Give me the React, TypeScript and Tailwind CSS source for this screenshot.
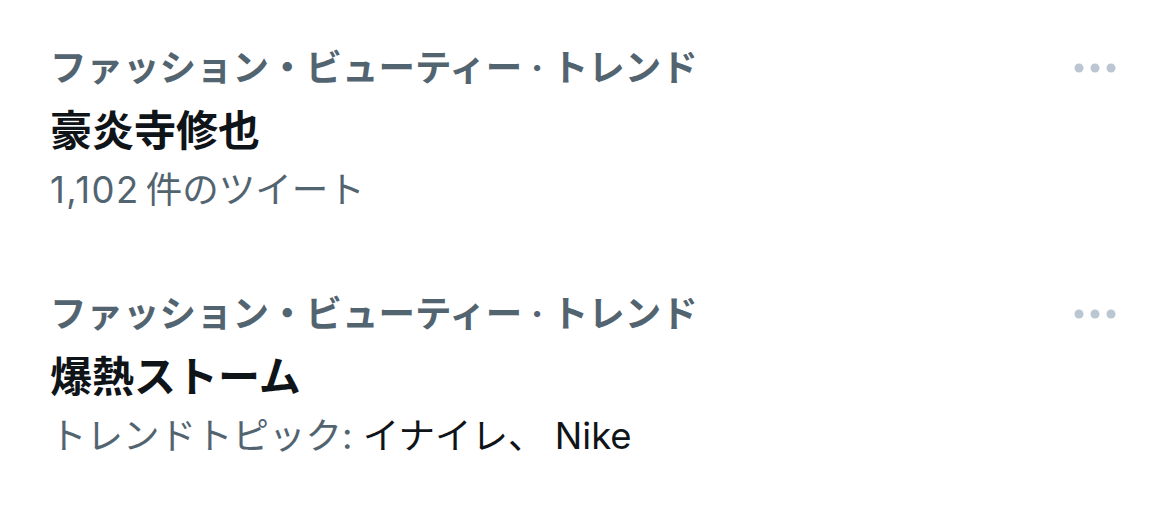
import React from "react";

type Trend = {
  category: string;
  title: string;
  meta: React.ReactNode;
};

const trends: Trend[] = [
  {
    category: "ファッション・ビューティー · トレンド",
    title: "豪炎寺修也",
    meta: (
      <span>
        <span className="tracking-[1.5px] mr-[6px]">1,102</span>件のツイート
      </span>
    ),
  },
  {
    category: "ファッション・ビューティー · トレンド",
    title: "爆熱ストーム",
    meta: (
      <span>
        トレンドトピック: <span className="text-[#0f1419]">イナイレ、 Nike</span>
      </span>
    ),
  },
];

function MoreDots() {
  return (
    <svg width="46" height="10" viewBox="0 0 46 10" fill="#bac6d1" aria-hidden="true">
      <circle cx="5" cy="5" r="4.5" />
      <circle cx="21" cy="5" r="4.5" />
      <circle cx="37" cy="5" r="4.5" />
    </svg>
  );
}

export default function App() {
  return (
    <div
      className="w-[1170px] h-[529px] bg-white overflow-hidden"
      style={{ fontFamily: 'Inter, "Noto Sans CJK JP", sans-serif' }}
    >
      {trends.map((t, i) => (
        <div key={i} className="flex justify-between pl-[50px] pr-[50px] pt-[36px] pb-[28px]">
          <div className="flex flex-col">
            <div className="text-[36.5px] leading-[64px] font-bold text-[#536471]">{t.category}</div>
            <div className="text-[42px] leading-[62px] font-bold text-[#0f1419]">{t.title}</div>
            <div className="text-[36.5px] leading-[56px] text-[#536471]">{t.meta}</div>
          </div>
          <div className="h-[64px] flex items-center">
            <MoreDots />
          </div>
        </div>
      ))}
    </div>
  );
}
